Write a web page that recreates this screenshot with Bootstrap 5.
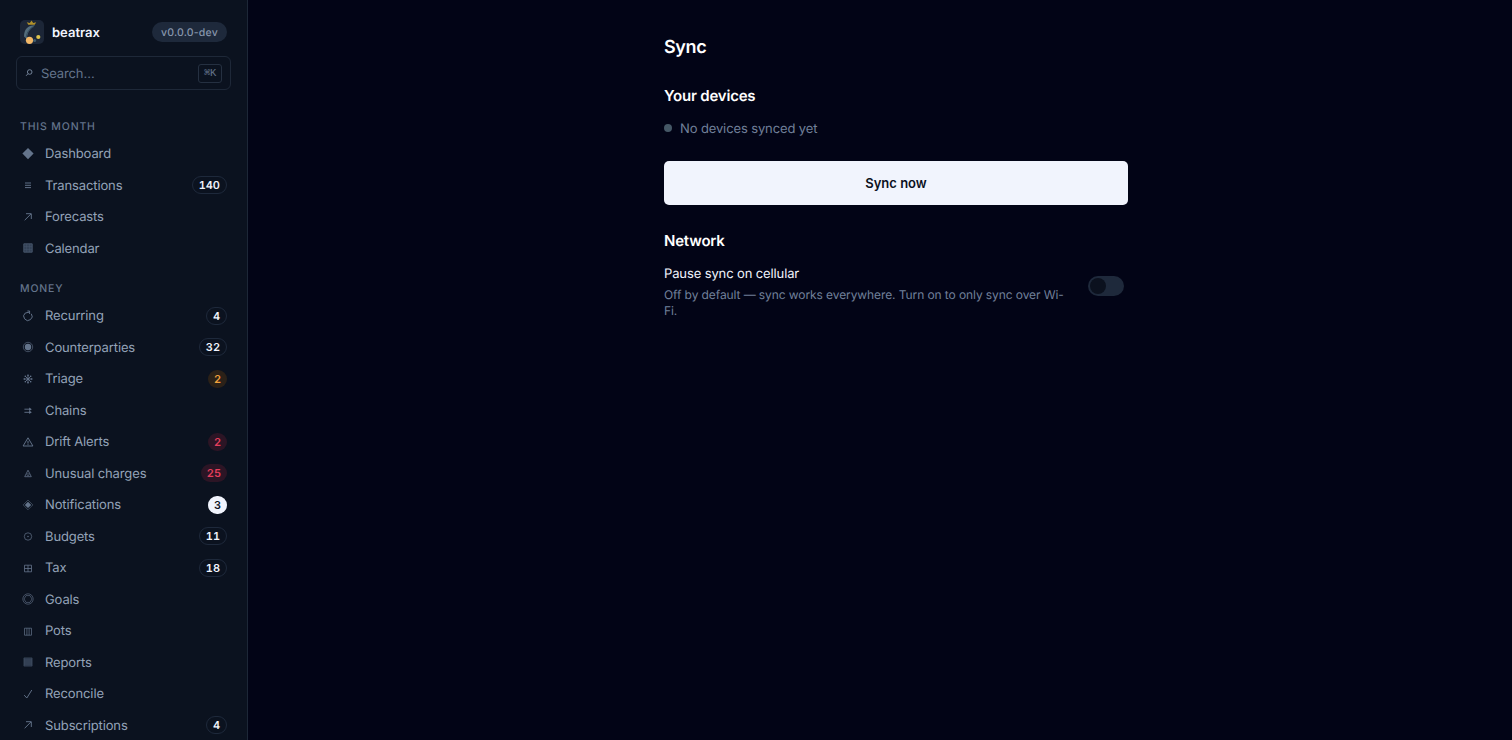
<!DOCTYPE html>
<html lang="en" data-bs-theme="dark">
<head>
<meta charset="utf-8">
<meta name="viewport" content="width=device-width, initial-scale=1">
<title>Sync · beatrax</title>
<link href="https://cdn.jsdelivr.net/npm/bootstrap@5.3.0/dist/css/bootstrap.min.css" rel="stylesheet">
<style>
body{font-family:Inter,sans-serif;font-size:13px;line-height:1.5;background:#020416;color:#f1f4fd;text-rendering:geometricPrecision;letter-spacing:-.12px}
.sidebar{width:248px;background:#0b121f;border-right:1px solid #1d2737;padding:20px 20px 0}
.brand-row{height:24px}
.brand-name{font-size:13px;font-weight:600;color:#f1f4fd;padding-top:3px;letter-spacing:0}
.version{height:20px;padding:0 9px;border-radius:10px;background:#1e293b;color:#8796ad;font-size:10.5px;font-weight:500;line-height:21px;letter-spacing:.02em}
.search{height:34px;margin:12px -4px 0;padding:0 8px;border:1px solid #1e2838;border-radius:6px;color:#64748b}
.search-text{padding-top:3px}
.kbd-hint{width:24px;height:19px;border:1px solid #253041;border-radius:3px;font-size:10.5px;line-height:19px;text-align:center;font-family:"Liberation Mono","DejaVu Sans Mono",monospace;letter-spacing:-.02em}
.section-title{font-size:10.5px;font-weight:500;letter-spacing:.08em;line-height:16px;margin:17px 0 3px;color:#64748b}
.first-section{margin-top:29px}
.side-link{height:31.5px;padding:2px 0 0;gap:9px;color:#94a3b8}
.side-link svg{width:16px;height:16px;margin-top:-2px;fill:none;stroke:#64748b;stroke-width:.95;flex:none}
.side-link:hover{color:#f1f4fd}
.count{height:18px;margin-top:-2px;padding:0 6px;border:1px solid #1e293b;border-radius:9px;font-size:11px;font-weight:600;line-height:16px;color:#f1f4fd;font-variant-numeric:tabular-nums;letter-spacing:0}
.count-fill{border:0;line-height:18px}
.count-warn{background:#2b2118;color:#f0a03c}
.count-bad{background:#2c1525;color:#e63e5c}
.count-new{background:#f1f4fd;color:#0b111e}
.panel{width:464px;padding-top:36px;margin-left:32px}
h1{font-size:18px;font-weight:600;line-height:24px;letter-spacing:-.35px}
h2{font-size:15px;font-weight:600;line-height:22px;letter-spacing:-.2px}
.devices-title{margin-top:25px}
.status-line{margin-top:10.5px}
.status-label{padding-top:2px}
.status-dot{width:8px;height:8px;background:#455866}
.muted-text{color:#71809a}
.sync-btn{height:44px;margin-top:22px;padding:2px 0 0;border-radius:5px;background:#f1f4fd;color:#0b111e;font-size:13px;font-weight:600}
.network-title{margin-top:25px}
.setting{margin-top:11.5px}
.setting-copy{width:404px}
.setting-name{padding-top:1px}
.help{margin-top:2.5px;font-size:12px;line-height:16px;letter-spacing:-.09px;color:#71809a}
.toggle{width:36px;height:20px;margin-top:12px;padding:2px;border-radius:10px;background:#1e293b}
.toggle span{width:16px;height:16px;background:#0b111e}
</style>
</head>
<body class="vh-100 overflow-hidden">
<svg class="d-none">
<symbol id="arrow" viewBox="0 0 16 16"><path d="M4.7 11.2 11 4.9M6 4.7h5.3V10"/></symbol>
<symbol id="grid-box" viewBox="0 0 16 16"><path d="M3.8 3.8h8.4v8.4H3.8z" fill="#334155" stroke="#47566c"/><path d="M4 6.6h8M4 9.4h8M6.6 4v8M9.4 4v8" stroke="#47566c" stroke-width=".5"/></symbol>
</svg>
<div class="d-flex h-100">
<aside class="sidebar flex-shrink-0 overflow-hidden">
  <div class="brand-row d-flex align-items-center">
    <svg width="24" height="24" viewBox="0 0 24 24" class="me-2"><rect width="24" height="24" rx="5" fill="#1c2637"/><path d="M15 5.2C8 5 4 9 4 16.5L7 19c0-6 2.5-10 8-13.8z" fill="#536c7b"/><path d="M14 6.5C10 8 7 12 6.2 17" fill="none" stroke="#344c5d"/><path d="m6.8 2.2 3 .8 1.7-2.6L13.2 3l3-.8-1.5 2.6H8.3z" fill="#b0902a"/><circle cx="14.6" cy="20.4" r="1.5" fill="#405d6d"/><circle cx="9.5" cy="20.3" r="3.6" fill="#f3b868"/><circle cx="18.3" cy="17" r="2.1" fill="#dcc34c"/></svg>
    <span class="brand-name">beatrax</span><span class="version ms-auto">v0.0.0-dev</span>
  </div>
  <div class="search d-flex align-items-center">
    <svg width="8" height="10" viewBox="0 0 8 10" fill="none" stroke="#7b8ba1" stroke-width=".9"><circle cx="4.7" cy="4" r="2.3"/><path d="M3 5.7 1.1 7.8"/></svg>
    <span class="search-text ms-2">Search…</span><span class="kbd-hint ms-auto">⌘K</span>
  </div>
  <div class="section-title first-section">THIS MONTH</div>
  <nav class="nav flex-column flex-nowrap">
    <a class="nav-link side-link d-flex align-items-center" href="#"><svg viewBox="0 0 16 16"><path d="m8 2 5.6 5.6L8 13.2 2.4 7.6z" fill="#64748b" stroke="none"/></svg>Dashboard</a>
    <a class="nav-link side-link d-flex align-items-center" href="#"><svg viewBox="0 0 16 16"><path d="M5 6h6M5 8.3h6M5 10.6h6"/></svg>Transactions<span class="count ms-auto">140</span></a>
    <a class="nav-link side-link d-flex align-items-center" href="#"><svg><use href="#arrow"/></svg>Forecasts</a>
    <a class="nav-link side-link d-flex align-items-center" href="#"><svg><use href="#grid-box"/></svg>Calendar</a>
  </nav>
  <div class="section-title">MONEY</div>
  <nav class="nav flex-column flex-nowrap">
    <a class="nav-link side-link d-flex align-items-center" href="#"><svg viewBox="0 0 16 16"><path d="M11.3 5.8A4.2 4.2 0 1 1 5.3 5L9.2 4.2M7.4 3h2.2v3"/></svg>Recurring<span class="count ms-auto">4</span></a>
    <a class="nav-link side-link d-flex align-items-center" href="#"><svg viewBox="0 0 16 16"><circle cx="8" cy="8" r="4.7" stroke-width=".6"/><circle cx="8" cy="8" r="3.2" fill="#64748b" stroke="none"/></svg>Counterparties<span class="count ms-auto">32</span></a>
    <a class="nav-link side-link d-flex align-items-center" href="#"><svg viewBox="0 0 16 16"><path d="M8 3.8v8.4M3.8 8h8.4M5 5l6 6M11 5l-6 6" stroke-width=".9"/><g fill="#64748b" stroke="none"><circle cx="8" cy="4.3" r=".8"/><circle cx="8" cy="11.7" r=".8"/><circle cx="4.3" cy="8" r=".8"/><circle cx="11.7" cy="8" r=".8"/><circle cx="5.3" cy="5.3" r=".8"/><circle cx="10.7" cy="5.3" r=".8"/><circle cx="5.3" cy="10.7" r=".8"/><circle cx="10.7" cy="10.7" r=".8"/></g></svg>Triage<span class="count count-fill count-warn ms-auto">2</span></a>
    <a class="nav-link side-link d-flex align-items-center" href="#"><svg viewBox="0 0 16 16"><path d="M4.4 7.2H10M4.4 10.3H10" stroke-width=".9"/><path d="m9.2 5.5 2.6 1.7-2.6 1.7zM9.2 8.6l2.6 1.7L9.2 12z" fill="#64748b" stroke="none"/></svg>Chains</a>
    <a class="nav-link side-link d-flex align-items-center" href="#"><svg viewBox="0 0 16 16"><path d="m8 3.8 4.9 8.2H3.1zM8 6.8v2.8M8 10.2v.9" stroke-linejoin="round"/></svg>Drift Alerts<span class="count count-fill count-bad ms-auto">2</span></a>
    <a class="nav-link side-link d-flex align-items-center" href="#"><svg viewBox="0 0 16 16"><path d="m8 5.2 3.3 6.5H4.7z" stroke-width=".8"/><circle cx="8" cy="9.7" r="1.1" stroke-width=".6"/></svg>Unusual charges<span class="count count-fill count-bad ms-auto">25</span></a>
    <a class="nav-link side-link d-flex align-items-center" href="#"><svg viewBox="0 0 16 16"><path d="m8 3 4.9 4.9L8 12.8 3.1 7.9z" stroke-width=".5"/><path d="m8 4.7 3.2 3.2L8 11.1 4.8 7.9z" fill="#64748b" stroke="none"/></svg>Notifications<span class="count count-fill count-new ms-auto">3</span></a>
    <a class="nav-link side-link d-flex align-items-center" href="#"><svg viewBox="0 0 16 16"><circle cx="8" cy="8.5" r="3.7" stroke-width=".7"/><circle cx="8" cy="8.5" r=".7" fill="#64748b" stroke="none"/></svg>Budgets<span class="count ms-auto">11</span></a>
    <a class="nav-link side-link d-flex align-items-center" href="#"><svg viewBox="0 0 16 16"><path d="M4.5 5.2h7v6.6h-7zM8 5.2v6.6M4.5 8.5h7" stroke-width=".8"/></svg>Tax<span class="count ms-auto">18</span></a>
    <a class="nav-link side-link d-flex align-items-center" href="#"><svg viewBox="0 0 16 16"><circle cx="8" cy="8" r="5.2" stroke-width=".6"/><path d="m6 4.6h4l2 3.4-2 3.4H6L4 8z" stroke-width=".6"/></svg>Goals</a>
    <a class="nav-link side-link d-flex align-items-center" href="#"><svg viewBox="0 0 16 16"><path d="M4.5 5.2h7v7h-7zM6.9 5.2v7M9.1 5.2v7" stroke-width=".7"/></svg>Pots</a>
    <a class="nav-link side-link d-flex align-items-center" href="#"><svg viewBox="0 0 16 16"><path d="M3.9 3.9h8.2v8.2H3.9z" fill="#273346" stroke="#536177" stroke-width=".5"/><path d="M4 6h8M4 8h8M4 10h8" stroke="#536177" stroke-width=".6"/></svg>Reports</a>
    <a class="nav-link side-link d-flex align-items-center" href="#"><svg viewBox="0 0 16 16"><path d="M4.2 9.1 6.8 12l5-8"/></svg>Reconcile</a>
    <a class="nav-link side-link d-flex align-items-center" href="#"><svg><use href="#arrow"/></svg>Subscriptions<span class="count ms-auto">4</span></a>
  </nav>
</aside>
<main class="flex-grow-1 d-flex justify-content-center">
  <div class="panel">
    <h1 class="mb-0">Sync</h1>
    <h2 class="mb-0 devices-title">Your devices</h2>
    <div class="d-flex align-items-center gap-2 status-line"><span class="status-dot rounded-circle"></span><span class="status-label muted-text">No devices synced yet</span></div>
    <button class="btn sync-btn w-100 border-0" type="button">Sync now</button>
    <h2 class="mb-0 network-title">Network</h2>
    <div class="d-flex align-items-start justify-content-between setting">
      <div class="setting-copy"><div class="setting-name">Pause sync on cellular</div><div class="help">Off by default — sync works everywhere. Turn on to only sync over Wi-Fi.</div></div>
      <div class="toggle d-flex flex-shrink-0 me-1"><span class="rounded-circle"></span></div>
    </div>
  </div>
</main>
</div>
<script src="https://cdn.jsdelivr.net/npm/bootstrap@5.3.0/dist/js/bootstrap.bundle.min.js"></script>
</body>
</html>
